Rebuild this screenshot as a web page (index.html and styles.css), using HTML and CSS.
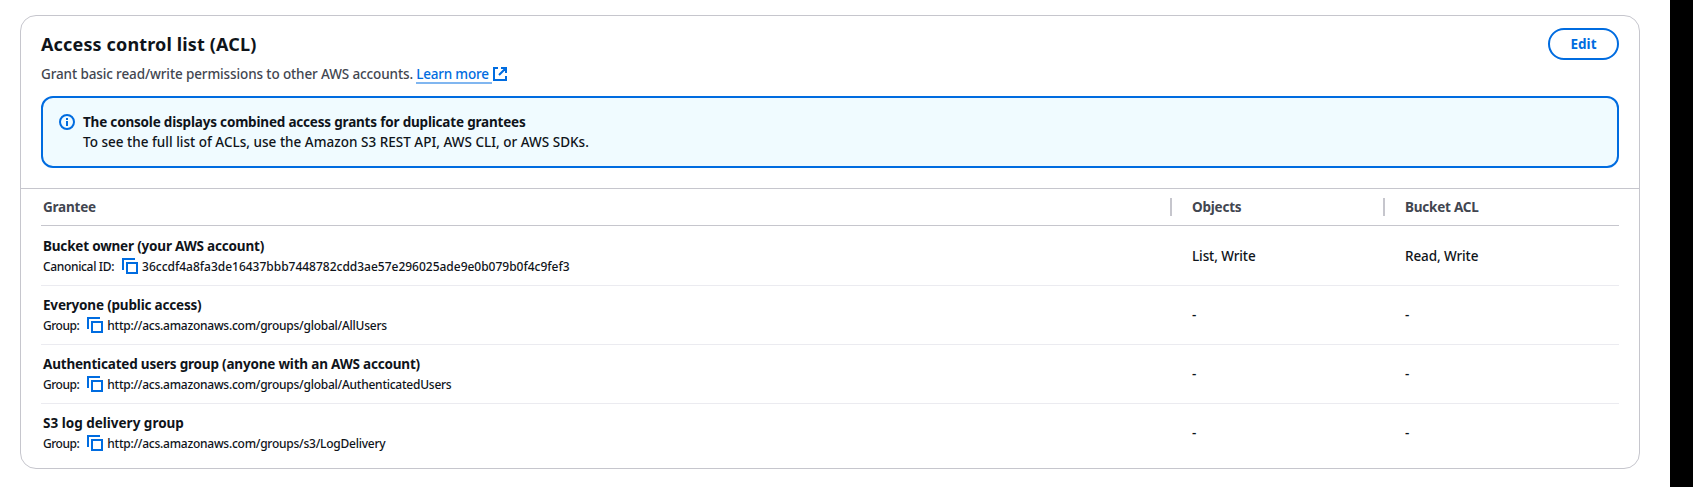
FILE: index.html
```html
<!DOCTYPE html>
<html lang="en">
<head>
<meta charset="utf-8">
<title>Access control list (ACL)</title>
<link rel="stylesheet" href="styles.css">
</head>
<body>
<svg class="sprite" aria-hidden="true">
  <symbol id="copy" viewBox="0 0 16 16"><path d="M1 12V1h12M5 5h10v10H5z" fill="none" stroke="currentColor" stroke-width="2"/></symbol>
</svg>
<main class="page">
  <section class="card">
    <header class="header">
      <div class="heading">
        <h2 class="title">Access control list (ACL)</h2>
        <p class="desc">Grant basic read/write permissions to other AWS accounts.<a class="link" href="#">Learn more</a><svg class="external" viewBox="0 0 14 14" fill="none" stroke="currentColor" stroke-width="2"><path d="M5 1H1v12h12V9M8 1h5v5M13 1L6 8"/></svg></p>
      </div>
      <button class="edit">Edit</button>
    </header>
    <div class="alert">
      <svg class="info" viewBox="0 0 16 16"><circle cx="8" cy="8" r="7" fill="none" stroke="currentColor" stroke-width="2"/><path d="M7 4h2v2H7zM7 7h2v5H7z" fill="currentColor"/></svg>
      <div class="alert-text">
        <div class="strong">The console displays combined access grants for duplicate grantees</div>
        <div class="note">To see the full list of ACLs, use the Amazon S3 REST API, AWS CLI, or AWS SDKs.</div>
      </div>
    </div>
    <div class="table">
      <div class="row head">
        <div class="cell">Grantee</div>
        <div class="cell split">Objects</div>
        <div class="cell split">Bucket ACL</div>
      </div>
      <div class="row first">
        <div class="cell grantee"><div class="strong">Bucket owner (your AWS account)</div>
          <div class="detail"><span class="label">Canonical ID:</span><svg class="copy"><use href="#copy"/></svg><span class="id">36ccdf4a8fa3de16437bbb7448782cdd3ae57e296025ade9e0b079b0f4c9fef3</span></div></div>
        <div class="cell value">List, Write</div>
        <div class="cell value">Read, Write</div>
      </div>
      <div class="row">
        <div class="cell grantee"><div class="strong">Everyone (public access)</div>
          <div class="detail"><span class="label group">Group:</span><svg class="copy"><use href="#copy"/></svg><span class="url">http://acs.amazonaws.com/groups/global/AllUsers</span></div></div>
        <div class="cell value">-</div>
        <div class="cell value">-</div>
      </div>
      <div class="row">
        <div class="cell grantee"><div class="strong">Authenticated users group (anyone with an AWS account)</div>
          <div class="detail"><span class="label group">Group:</span><svg class="copy"><use href="#copy"/></svg><span class="url">http://acs.amazonaws.com/groups/global/AuthenticatedUsers</span></div></div>
        <div class="cell value">-</div>
        <div class="cell value">-</div>
      </div>
      <div class="row">
        <div class="cell grantee"><div class="strong wide">S3 log delivery group</div>
          <div class="detail"><span class="label group">Group:</span><svg class="copy"><use href="#copy"/></svg><span class="url">http://acs.amazonaws.com/groups/s3/LogDelivery</span></div></div>
        <div class="cell value">-</div>
        <div class="cell value">-</div>
      </div>
    </div>
  </section>
</main>
</body>
</html>
```
FILE: styles.css
```css
* { box-sizing: border-box; }
body { margin: 0; background: #000; font: 500 13.5px/20px "Noto Sans", sans-serif; color: #0f141a; white-space: nowrap; }
.sprite { display: none; }
.page { width: 1670px; height: 487px; padding: 15px 30px 0 20px; background: #fff; }
.card { height: 454px; border: 1px solid #c6c6cd; border-radius: 16px; }
.header { display: flex; justify-content: space-between; align-items: flex-start; padding: 12px 20px 0; height: 80px; }
.title { margin: 0; font-size: 18px; line-height: 32px; font-weight: 700; letter-spacing: 0.15px; }
.desc { display: flex; align-items: center; margin: 4px 0 0; color: #424650; letter-spacing: -0.12px; }
.link { margin-left: 3.3px; width: 76px; color: #006ce0; text-decoration: none; border-bottom: 2px solid #80b6f0; height: 20px; letter-spacing: -0.22px; }
.external { width: 14px; height: 14px; margin-left: 1px; color: #006ce0; }
.edit { width: 71px; height: 32px; border: 2px solid #006ce0; border-radius: 16px; background: #fff; color: #006ce0; font: 700 13.5px/20px "Noto Sans", sans-serif; padding: 0; }
.alert { display: flex; gap: 8px; height: 72px; margin: 0 20px; padding: 14px 16px; border: 2px solid #006ce0; border-radius: 12px; background: #f0fbff; }
.info { width: 16px; height: 16px; margin-top: 2px; color: #006ce0; }
.strong { font-weight: 700; letter-spacing: -0.19px; }
.wide { letter-spacing: 0; }
.note { letter-spacing: 0.013px; }
.table { margin-top: 20px; border-top: 1px solid #c6c6cd; padding: 0 20px; }
.row { display: grid; grid-template-columns: 1129px 213px 1fr; align-items: center; height: 59px; padding-top: 1px; border-bottom: 1px solid #ebebf0; letter-spacing: -0.1px; }
.first { height: 60px; padding-top: 2px; }
.row:last-child { border-color: transparent; }
.head { height: 37px; padding-top: 0; border-color: #c6c6cd; color: #424650; font-weight: 700; letter-spacing: -0.22px; }
.cell { padding-left: 22px; }
.cell:first-child { padding-left: 2px; }
.value { padding-bottom: 2px; }
.split { border-left: 2px solid #c6c6cd; padding-left: 20px; height: 18px; line-height: 18px; }
.detail { display: flex; align-items: center; height: 20px; margin-top: 1px; font-size: 12px; }
.label { letter-spacing: -0.34px; }
.group { letter-spacing: -0.48px; }
.id { letter-spacing: -0.015px; }
.url { letter-spacing: -0.245px; }
.copy { width: 16px; height: 16px; margin: 0 4px 2px 8px; color: #006ce0; }
```
